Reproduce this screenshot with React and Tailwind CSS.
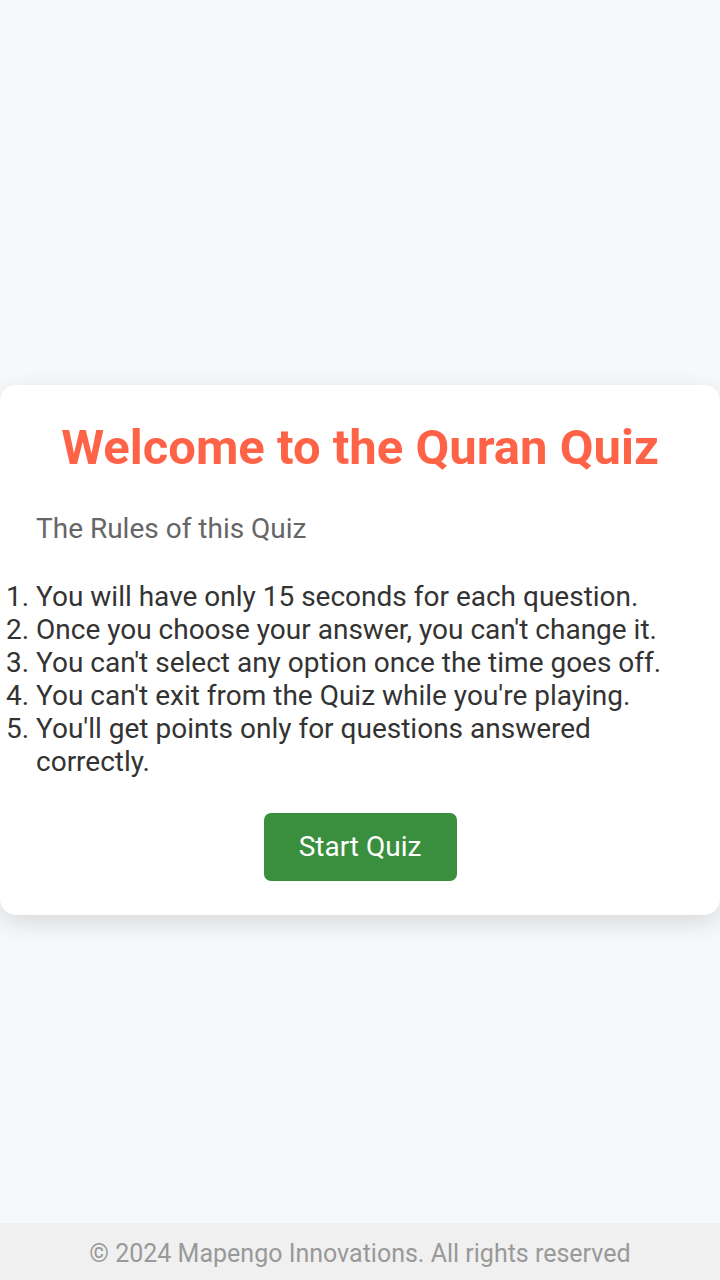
export default function App() {
  const rules = [
    "You will have only 15 seconds for each question.",
    "Once you choose your answer, you can't change it.",
    "You can't select any option once the time goes off.",
    "You can't exit from the Quiz while you're playing.",
    "You'll get points only for questions answered correctly.",
  ];
  return (
    <div className="min-h-screen flex flex-col bg-[#f7f8fa]" style={{ fontFamily: "Roboto, 'Noto Sans', sans-serif" }}>
      <main className="flex-1 flex items-center pt-[77px]">
        <div className="w-full h-[530px] bg-white rounded-[16px] shadow-[0_8px_24px_rgba(0,0,0,0.12)] flex flex-col pt-[37px]">
          <h1 className="text-center text-[49px] leading-[52px] font-bold text-[#ff6347]">Welcome to the Quran Quiz</h1>
          <p className="mt-[38px] pl-[36px] text-[28px] leading-[33px] text-[#666666]">The Rules of this Quiz</p>
          <ol className="mt-[35px] list-decimal pl-[36px] pr-[20px] text-[28px] leading-[33px] text-[#333333]">
            {rules.map((r) => (
              <li key={r}>{r}</li>
            ))}
          </ol>
          <div className="mt-[35px] flex justify-center">
            <button className="w-[193px] h-[68px] bg-[#3a8f3e] text-white text-[28px] rounded-[7px]">Start Quiz</button>
          </div>
        </div>
      </main>
      <footer className="h-[57px] bg-[#f0f0f0] flex items-center justify-center pt-[5px] text-[25px] text-[#999999]">
        © 2024 Mapengo Innovations. All rights reserved
      </footer>
    </div>
  );
}
